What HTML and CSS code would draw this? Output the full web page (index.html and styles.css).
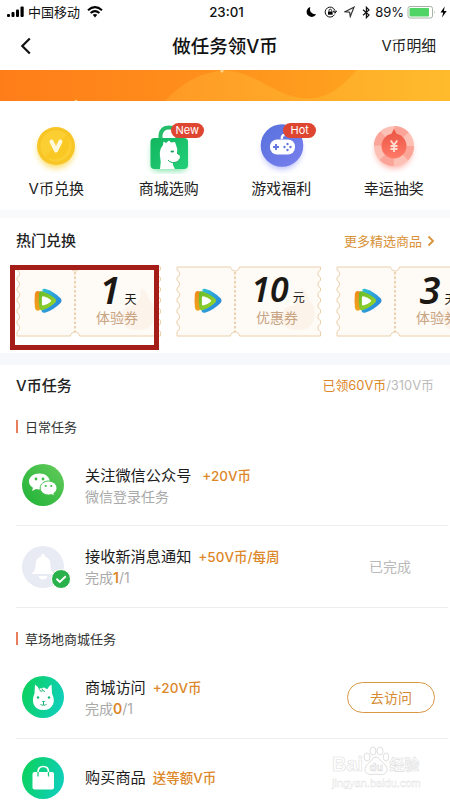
FILE: index.html
```html
<!DOCTYPE html>
<html lang="zh-CN">
<head>
<meta charset="utf-8">
<title>做任务领V币</title>
<link rel="stylesheet" href="styles.css">
</head>
<body>
<svg class="defs" width="0" height="0" aria-hidden="true">
  <defs>
    <linearGradient id="gBlue" x1="0" y1="0" x2="1" y2="1"><stop offset="0" stop-color="#35c3d6"/><stop offset="1" stop-color="#2479dc"/></linearGradient>
    <linearGradient id="gOrange" x1="0" y1="0" x2="0" y2="1"><stop offset="0" stop-color="#f08a1c"/><stop offset="1" stop-color="#eda51d"/></linearGradient>
    <linearGradient id="gLime" x1="0" y1="0" x2="1" y2="1"><stop offset="0" stop-color="#69b92d"/><stop offset="1" stop-color="#9fd827"/></linearGradient>
    <linearGradient id="gMint" x1="0" y1="0" x2="1" y2="0.3"><stop offset="0" stop-color="#0bd254"/><stop offset="1" stop-color="#0fcfb4"/></linearGradient>
    <linearGradient id="gWechat" x1="0" y1="1" x2="1" y2="0"><stop offset="0" stop-color="#1cb235"/><stop offset="1" stop-color="#66cb5c"/></linearGradient>
    <linearGradient id="gBag" x1="0" y1="0" x2="1" y2="1"><stop offset="0" stop-color="#12b55d"/><stop offset="1" stop-color="#23d07a"/></linearGradient>
    <linearGradient id="gPad" x1="0" y1="0" x2="1" y2="1"><stop offset="0" stop-color="#5671dc"/><stop offset="1" stop-color="#7a80ee"/></linearGradient>
    <linearGradient id="gRed" x1="0" y1="0" x2="0" y2="1"><stop offset="0" stop-color="#ed5a49"/><stop offset="1" stop-color="#ff7b68"/></linearGradient>
    <linearGradient id="gBanner" x1="0" y1="0" x2="1" y2="0"><stop offset="0" stop-color="#ff7d19"/><stop offset="0.45" stop-color="#ff8f1b"/><stop offset="0.8" stop-color="#ffa31f"/><stop offset="1" stop-color="#ffaf27"/></linearGradient>
    <linearGradient id="gWave" x1="0" y1="0" x2="1" y2="0"><stop offset="0" stop-color="#ff9a25"/><stop offset="1" stop-color="#ffbb2c"/></linearGradient>
    <symbol id="play" viewBox="0 0 28 26">
      <path d="M8.500 1.200Q9.500.4 11 .8Q20 3.500 26.500 10.200Q28.500 12.500 26.500 14.900Q20 21.500 11 24.800Q8.500 25.200 7.500 23Z" fill="url(#gBlue)"/>
      <path d="M4 3Q1.300 3 .9 6Q.1 13 .9 19.500Q1.300 22.500 4 22.700L8 21V4Z" fill="url(#gOrange)"/>
      <path d="M6 3.600Q7.200 3 9 3.800Q17 6.800 21.500 11Q22.800 12.500 21.500 14.200Q16 19.500 8.500 22Q6 22.700 5.400 20Q4 13 5 5.500Q5.200 4 6 3.600Z" fill="url(#gLime)"/>
      <path d="M9.500 8.300Q14 9.500 16.800 12Q17.500 12.900 16.800 13.700Q13.500 16.500 9.300 17.600Q7.800 17.700 7.900 16V9.500Q8 8.100 9.500 8.300Z" fill="#fff"/>
    </symbol>
    <symbol id="ticket" viewBox="0 0 146 71">
      <path d="M1 1H54.500A4.500 4 0 0 0 63.500 1H144.500V4A4 4 0 0 0 144.500 11.500V14.500A4 4 0 0 0 144.500 22V25A4 4 0 0 0 144.500 32.500V36A4 4 0 0 0 144.500 43.500V47A4 4 0 0 0 144.500 54.500V58A4 4 0 0 0 144.500 65.500V70H63.500A4.500 4 0 0 0 54.500 70H1V65.500A4 4 0 0 0 1 58V54.500A4 4 0 0 0 1 47V43.500A4 4 0 0 0 1 36V32.500A4 4 0 0 0 1 25V22A4 4 0 0 0 1 14.500V11.500A4 4 0 0 0 1 4Z" fill="#fefaf5" stroke="#ecd0ac"/>
      <path d="M125 22Q132 27 133 34Q142 42 137 56Q133 65 120 64Q105 63 105 49Q108 40 118 39Q126 34 125 22Z" fill="#fbe9dc" opacity=".4"/>
      <path d="M59 6V66" stroke="#e3bd8c" stroke-width="1.300" stroke-dasharray="2.500 2"/>
    </symbol>
  </defs>
</svg>

<div class="screen">
  <header class="status">
    <div class="status-left">
      <svg width="19" height="12" viewBox="0 0 19 12"><rect x="1" y="8" width="3" height="3" rx="1"/><rect x="5.500" y="6" width="3" height="5" rx="1"/><rect x="10" y="3.500" width="3" height="7.500" rx="1"/><rect x="14.500" y="0.500" width="3.200" height="10.500" rx="1"/></svg>
      <span class="carrier">中国移动</span>
      <svg class="wifi" width="16" height="12" viewBox="0 0 16 12" fill="none" stroke="#000"><path d="M1 4.200Q8-1.800 15 4.200" stroke-width="2.100"/><path d="M3.600 7Q8 3.200 12.400 7" stroke-width="2"/><path d="M5.700 8.800Q8 7 10.300 8.800L8 11.400Z" fill="#000" stroke="none"/></svg>
    </div>
    <time class="clock">23:01</time>
    <div class="status-right">
      <svg width="11" height="12" viewBox="0 0 11 12"><path d="M4.200 1Q2.500 8 10.200 8.500Q7.800 11.500 4.800 10.800Q.7 9.800.6 6Q.7 2.300 4.200 1Z"/></svg>
      <svg width="13" height="12" viewBox="0 0 13 12"><path d="M10.500 8.600A5 5 0 1 1 10.800 4.200M9 5.200H12.600L10.900 7.300Z" fill="none" stroke="#111"/><rect x="4" y="5.500" width="4.600" height="3.200"/><path d="M5 5.500V4.500a1.300 1.300 0 0 1 2.600 0v1" fill="none" stroke="#111" stroke-width=".9"/></svg>
      <svg width="11" height="12" viewBox="0 0 11 12"><path d="M1 5.700L10 1.200L6.300 10.500L5.600 6.200Z" fill="none" stroke="#333" stroke-width="1.200"/></svg>
      <svg width="9" height="13" viewBox="0 0 9 13"><path d="M1 3.700L7 9L4.400 11.700V1.300L7 4L1 9.200" fill="none" stroke="#111" stroke-width="1.200"/></svg>
      <span class="percent">89%</span>
      <svg class="battery" width="29" height="14" viewBox="0 0 29 14"><rect x="1" y="1.500" width="24.500" height="11.500" rx="2" fill="#fff" stroke="#a5b4a8"/><rect x="2.500" y="3" width="19.500" height="8.500" rx="1" fill="#50d465"/><path d="M27 5.500q1.500 1.700 0 3.500Z" fill="#a5b4a8"/></svg>
      <svg width="7" height="12" viewBox="0 0 7 12"><path d="M4.700.5L.5 6.600H3.200L2 11.500L6.700 5H3.900Z"/></svg>
    </div>
  </header>

  <nav class="nav">
    <svg class="back" width="12" height="18" viewBox="0 0 12 18"><path d="M9.800 1.500L2.300 9L9.800 16.500" fill="none" stroke="#111" stroke-width="2.200"/></svg>
    <h1>做任务领V币</h1>
    <a class="detail">V币明细</a>
  </nav>

  <svg class="banner" width="450" height="32" viewBox="0 0 450 32">
    <rect width="450" height="32" fill="url(#gBanner)"/>
    <path d="M164 32Q190 3 225 0Q245 2 267 15Q312 42 342 15Q352 6 357 0H450V32Z" fill="url(#gWave)"/>
    <circle cx="222" cy="1" r="1.500" fill="#ffd48b"/><circle cx="76" cy="31" r="1.300" fill="#ffd48b"/>
  </svg>

  <section class="quick">
    <div class="quick-item">
      <div class="quick-icon">
        <svg width="50" height="54" viewBox="0 0 50 54"><circle class="glow" cx="25" cy="30" r="18" fill="#fcdc63"/><circle cx="25" cy="26" r="19" fill="#f8c526"/><circle cx="25" cy="26" r="15.500" fill="#fbce32"/><path d="M14 37A16 16 0 0 0 36 15Z" fill="#f9c318" opacity=".55"/><path d="M20.500 21.500L25 30.500L29.500 21.500" fill="none" stroke="#fff8da" stroke-width="4" stroke-linecap="round" stroke-linejoin="round"/></svg>
      </div>
      <span>V币兑换</span>
    </div>
    <div class="quick-item">
      <div class="quick-icon">
        <svg width="50" height="54" viewBox="0 0 50 54"><rect class="glow" x="8" y="23" width="34" height="28" rx="5" fill="#7fe4a9"/><path d="M16.500 20V15Q17.500 7.500 25 7.500Q32.500 7.500 33.500 15V20" fill="none" stroke="#25bd6a" stroke-width="4"/><rect x="6.500" y="18" width="37.500" height="31" rx="4" fill="url(#gBag)"/><path d="M16 49Q17.500 42 16 36Q15 30 19 25L19.500 21.500L22 23L25 20.500L27 22.500L31 22L32 25Q34 29 33 33Q37 35 35.500 39Q34 43 28.500 42.500Q29 46 31 49Z" fill="#fff"/><path d="M24 40Q25 42 28.500 42.500Q34 43 35.500 39" fill="none" stroke="#20ad63"/><ellipse cx="28.300" cy="31.500" rx="1.800" ry="1.100" fill="#219b5b"/><path d="M33 33l2 1.500" stroke="#219b5b"/></svg>
        <b class="tag">New</b>
      </div>
      <span>商城选购</span>
    </div>
    <div class="quick-item">
      <div class="quick-icon">
        <svg width="50" height="54" viewBox="0 0 50 54"><circle class="glow" cx="26" cy="30" r="19" fill="#b3b8fa"/><circle cx="26" cy="25.500" r="21.300" fill="url(#gPad)"/><path d="M26 19Q25 15.500 28.500 15" fill="none" stroke="#fff" stroke-width="2.300"/><rect x="14" y="19.500" width="25" height="15" rx="7" fill="#fff"/><path d="M20 24v6M17 27h6" stroke="#6676df" stroke-width="1.900"/><g fill="#6676df"><circle cx="31.500" cy="24" r="1.200"/><circle cx="31.500" cy="30" r="1.200"/><circle cx="28.500" cy="27" r="1.200"/><circle cx="34.500" cy="27" r="1.200"/></g></svg>
        <b class="tag">Hot</b>
      </div>
      <span>游戏福利</span>
    </div>
    <div class="quick-item">
      <div class="quick-icon">
        <svg width="50" height="54" viewBox="0 0 50 54"><circle class="glow" cx="25" cy="30" r="18" fill="#ffaaa0"/><circle cx="25" cy="26" r="20" fill="#fcc0b5"/><circle cx="25" cy="26" r="16" fill="none" stroke="#faa598" stroke-width="8" stroke-dasharray="12.566"/><path d="M21 17L25 8.500L29 17Z" fill="#ed5a49"/><circle cx="25" cy="26" r="12.500" fill="url(#gRed)"/><path d="M21.700 20.500L25 25L28.300 20.500M25 25V32M21.500 26H28.500M21.500 29H28.500" fill="none" stroke="#ffdcd2" stroke-width="1.900"/></svg>
      </div>
      <span>幸运抽奖</span>
    </div>
  </section>

  <section class="hot">
    <div class="hot-head"><h2>热门兑换</h2><a>更多精选商品<svg width="8" height="12" viewBox="0 0 8 12"><path d="M1.500 1.500L6 6L1.500 10.500" fill="none" stroke="#d99238" stroke-width="1.800"/></svg></a></div>
    <div class="tickets">
      <div class="ticket"><svg class="ticket-bg"><use href="#ticket"/></svg><svg class="play"><use href="#play"/></svg><div class="offer"><p><strong>1</strong><em>天</em></p><span>体验券</span></div></div>
      <div class="ticket"><svg class="ticket-bg"><use href="#ticket"/></svg><svg class="play"><use href="#play"/></svg><div class="offer"><p><strong class="wide">10</strong><em>元</em></p><span>优惠券</span></div></div>
      <div class="ticket"><svg class="ticket-bg"><use href="#ticket"/></svg><svg class="play"><use href="#play"/></svg><div class="offer"><p><strong>3</strong><em>天</em></p><span>体验券</span></div></div>
      <div class="marker"></div>
    </div>
  </section>

  <section class="tasks">
    <div class="tasks-head"><h2>V币任务</h2><p><b>已领60V币</b>/310V币</p></div>
    <h3>日常任务</h3>
    <article class="task first">
      <svg class="task-icon" width="42" height="42" viewBox="0 0 42 42"><circle cx="21" cy="21" r="21" fill="url(#gWechat)"/><path d="M17.500 9.500C11.500 9.500 7 13 7 17.500C7 20.200 8.500 22.300 11 23.800L10 27L14 25Q16 25.600 18.500 25.300Q27 24 27.800 17.500C27.500 13 23.500 9.500 17.500 9.500Z" fill="#fff"/><path d="M26.500 17C22 17 18.200 20 18.200 24C18.200 28 22 31 26.500 31Q28 31 29.500 30.500L32.500 32L31.800 29.400C34 28 35 26.200 35 24C35 20 31 17 26.500 17Z" fill="#fff" stroke="#45c14a"/><g fill="#3dbd46"><circle cx="14" cy="15" r="1.400"/><circle cx="21" cy="15" r="1.400"/><circle cx="23.700" cy="22" r="1.100"/><circle cx="29.300" cy="22" r="1.100"/></g></svg>
      <div class="task-body"><p class="title">关注微信公众号<b class="gap-wide">+20V币</b></p><p class="sub">微信登录任务</p></div>
    </article>
    <article class="task">
      <div class="task-icon"><svg width="42" height="42" viewBox="0 0 42 42"><circle cx="21" cy="21" r="21" fill="#e8eaf4"/><circle cx="21" cy="10" r="2" fill="#fff"/><path d="M10 27Q13.500 25 13.500 19Q13.500 10.500 21 10.500Q28.500 10.500 28.500 19Q28.500 25 32 27V28H10ZM16.500 30H25.500Q24.500 33.500 21 33.500Q17.500 33.500 16.500 30Z" fill="#fff"/></svg>
      <svg class="check" width="20" height="20" viewBox="0 0 20 20"><circle cx="10" cy="10" r="9.500" fill="#29b14b" stroke="#fff"/><path d="M5.500 9.800L8.800 13L14.800 7.200" fill="none" stroke="#fff" stroke-width="1.900"/></svg></div>
      <div class="task-body"><p class="title">接收新消息通知<b>+50V币/每周</b></p><p class="sub">完成<b>1</b>/1</p></div>
      <span class="done">已完成</span>
    </article>
    <h3 class="second">草场地商城任务</h3>
    <article class="task">
      <svg class="task-icon" width="42" height="42" viewBox="0 0 42 42"><circle cx="21" cy="21" r="21" fill="url(#gMint)"/><path d="M13 8.500Q15.500 10 17 13.500Q18 11.500 20 12.500Q21.500 10.500 23.500 12.500L25.500 13Q27 9.500 29.500 8.500Q29.800 13 30 17.500Q33 24 31 28.500Q28 34 21.500 34Q14 34 11.500 28Q10 23 12.500 17.500Z" fill="#fff"/><path d="M17.500 13.500Q18 16 20.500 15M20 13Q21 15.500 23 15.500M21.500 26V29M18.500 28Q19.500 30 21.500 29Q23.500 30 24.500 28" fill="none" stroke="#20af72"/><g fill="#18b97a"><circle cx="16" cy="21.500" r="1.200"/><circle cx="27" cy="21.500" r="1.200"/><path d="M19.800 25h3.400l-1.700 1.800Z"/></g></svg>
      <div class="task-body"><p class="title">商城访问<b>+20V币</b></p><p class="sub">完成<b>0</b>/1</p></div>
      <button class="visit">去访问</button>
    </article>
    <article class="task last">
      <svg class="task-icon" width="42" height="42" viewBox="0 0 42 42"><circle cx="21" cy="21" r="21" fill="url(#gMint)"/><rect x="10.500" y="15" width="21.500" height="17.500" rx="2" fill="#fff"/><path d="M16 15Q16 9.500 21.300 9.500Q26.500 9.500 26.500 15" fill="none" stroke="#fff" stroke-width="1.600"/><path d="M16 15V19.500M26.500 15V19.500" stroke="#15ca79" stroke-width="1.300"/></svg>
      <div class="task-body"><p class="title">购买商品<b>送等额V币</b></p></div>
    </article>
  </section>

  <div class="watermark">
    <div class="brand"><span>Bai</span><svg width="26" height="30" viewBox="0 0 26 30"><g fill="#fff" stroke="#e0e0e0"><ellipse cx="4" cy="11" rx="3" ry="4"/><ellipse cx="10" cy="5" rx="3" ry="4"/><ellipse cx="17" cy="5" rx="3" ry="4"/><ellipse cx="23" cy="11" rx="2.700" ry="4"/><path d="M13 11Q16 11 18 15Q25 20 24 25Q22 30 13 28Q4 30 2 25Q1 20 8 15Q10 11 13 11Z"/></g><text x="6.500" y="25" class="du">du</text></svg><span class="cn">经验</span></div>
    <p>jingyan.baidu.com</p>
  </div>
</div>
</body>
</html>
```
FILE: styles.css
```css
* { box-sizing: border-box; margin: 0; padding: 0; }
body { width: 450px; height: 800px; overflow: hidden; background: #fff; color: #222; font-family: Inter, "Noto Sans CJK SC", sans-serif; }
svg { display: block; flex: none; }
em { font-style: normal; }
b { font-weight: 500; }
.defs { position: absolute; }
.screen { position: relative; width: 450px; height: 800px; overflow: hidden; display: flex; flex-direction: column; }
.status { height: 22px; padding: 2px 3px 0 6px; display: grid; grid-template-columns: 1fr auto 1fr; align-items: center; color: #111; flex: none; }
.status-left, .status-right { display: flex; align-items: center; }
.carrier { font-size: 13px; line-height: 20px; margin-left: 3px; }
.wifi { margin-left: 7px; }
.clock { font: 500 13.300px/20px Inter, sans-serif; }
.status-right { justify-content: flex-end; gap: 7px; }
.percent { font: 13px/20px Inter, sans-serif; margin: 0 -4px 0 -3px; }
.battery { margin-right: -3px; }
.nav { height: 48px; flex: none; display: grid; grid-template-columns: 1fr auto 1fr; align-items: center; padding: 0 14px 0 20px; }
.nav h1 { font-size: 18.500px; font-weight: 500; line-height: 28px; color: #111; margin: 0 6px 0 0; }
.detail { justify-self: end; font-size: 14.800px; line-height: 24px; }
.banner { margin-bottom: -1px; }
.quick { flex: none; height: 117px; display: grid; grid-template-columns: repeat(4, 1fr); padding-top: 19px; border-bottom: 8px solid #f9fafc; background: #fff; }
.quick-item { display: flex; flex-direction: column; align-items: center; font-size: 15px; line-height: 24px; }
.quick-icon { position: relative; height: 57px; }
.glow { filter: blur(3px); }
.tag { position: absolute; left: 27px; top: 3px; width: 33px; height: 15px; border-radius: 8px; background: #df4631; color: #fff; font: 11px/15px Inter, sans-serif; text-align: center; }
.hot { flex: none; height: 147px; border-bottom: 12px solid #f6f8fb; }
.hot-head, .tasks-head { display: flex; align-items: center; justify-content: space-between; }
.hot-head { height: 46px; padding: 0 15px 0 16px; }
h2 { font-size: 15px; font-weight: 500; line-height: 24px; }
.hot-head a { display: flex; align-items: center; gap: 5px; color: #d99238; font-size: 13px; line-height: 20px; }
.tickets { position: relative; display: flex; gap: 14px; padding: 2px 0 0 16px; height: 73px; }
.ticket { position: relative; flex: none; width: 146px; height: 71px; display: flex; align-items: center; }
.ticket-bg { position: absolute; inset: 0; width: 146px; height: 71px; }
.play { position: relative; width: 28px; height: 26px; margin: -1px 0 0 18px; }
.offer { position: relative; width: 82px; margin: -5px 0 0 14px; text-align: center; }
.offer p { display: flex; justify-content: center; align-items: baseline; gap: 4px; height: 38px; padding-left: 2px; color: #1c1814; }
.offer strong { font: italic 600 38px/38px "Noto Sans", sans-serif; }
.offer strong.wide { font-size: 34px; }
.offer em { font-size: 12px; line-height: 16px; }
.offer span { display: block; color: #c8a381; font-size: 14px; line-height: 20px; }
.marker { position: absolute; left: 10px; top: 1px; width: 149px; height: 85px; border: 5px solid #a51d19; }
.tasks { flex: none; padding: 0 2px 0 16px; }
.tasks-head { height: 41px; padding: 1px 14px 0 0; }
.tasks-head p { color: #bbb; font-size: 12.900px; line-height: 20px; }
.tasks b { color: #dc8729; }
.tasks-head b { font-weight: 400; }
h3 { display: flex; align-items: center; height: 39px; padding-top: 2px; font-size: 13px; font-weight: 400; line-height: 20px; color: #333; }
h3::before { content: ""; width: 2px; height: 13px; margin-right: 7px; background: #e77f5f; }
h3.second { height: 61px; padding: 0; }
.task { height: 82px; display: flex; align-items: center; padding-left: 6px; border-bottom: 1px solid #ededed; }
.task.first { height: 81px; }
.tasks h3.second + .task { height: 70px; padding-bottom: 13px; }
.task-icon { position: relative; flex: none; width: 42px; height: 42px; }
.check { position: absolute; left: 29px; top: 23px; }
.task-body { flex: 1; margin-left: 21px; }
.title { font-size: 15.200px; line-height: 24px; color: #1c1c1c; }
.title b { font-size: 13.500px; margin-left: 7px; }
.title .gap-wide { margin-left: 11px; }
.sub { color: #aaa; font-size: 14px; line-height: 20px; margin-top: -1px; }
.sub b { font-weight: 600; }
.done { color: #b9b9b9; font-size: 14px; margin: -2px 37px 0 0; }
.visit { width: 88px; height: 31px; margin-right: 13px; border: 1.500px solid #d99845; border-radius: 16px; background: #fff; color: #d48b32; font: 14px/20px "Noto Sans CJK SC", sans-serif; }
.task.last { height: 78px; border: 0; }
.watermark { position: absolute; left: 332px; top: 746px; width: 92px; color: #fff; -webkit-text-stroke: .6px #e0e0e0; }
.brand { display: flex; align-items: flex-end; font: 700 20px/24px "Liberation Sans", sans-serif; }
.brand .cn { font: 700 15px/24px "Noto Sans CJK SC", sans-serif; }
.du { font: 700 11px "Liberation Sans", sans-serif; fill: #fff; stroke: #dadada; stroke-width: .6px; }
.watermark p { font: 11px/14px "Liberation Sans", sans-serif; -webkit-text-stroke: .4px #e2e2e2; }
```
